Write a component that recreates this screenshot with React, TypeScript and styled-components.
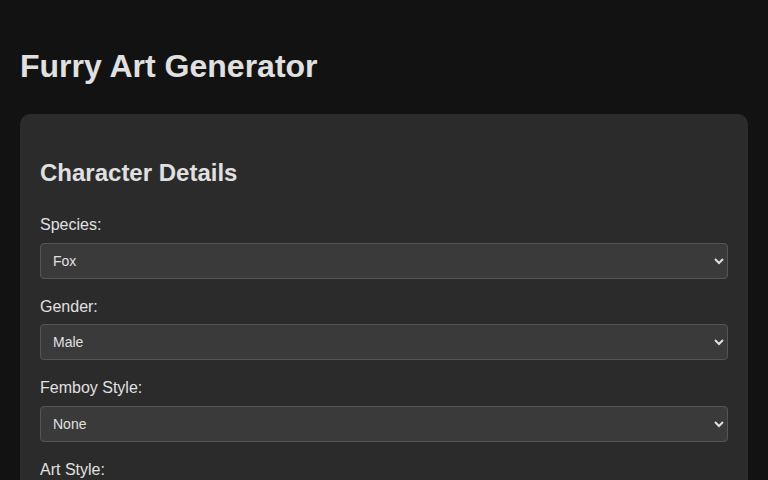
import React from "react";
import styled, { createGlobalStyle } from "styled-components";

const GlobalStyle = createGlobalStyle`
  body {
    margin: 0;
    padding: 20px;
    background-color: #121212;
    color: #e0e0e0;
    font-family: "Liberation Sans", Arial, sans-serif;
    line-height: 1.6;
  }
`;

type Field = {
  id: string;
  label: string;
  options: string[];
};

const fields: Field[] = [
  { id: "species", label: "Species:", options: ["Fox", "Wolf", "Cat", "Dragon", "Rabbit"] },
  { id: "gender", label: "Gender:", options: ["Male", "Female", "Non-binary"] },
  { id: "femboy", label: "Femboy Style:", options: ["None", "Subtle", "Moderate", "Full"] },
  { id: "artStyle", label: "Art Style:", options: ["Cartoon", "Realistic", "Anime", "Chibi"] },
];

export default function App() {
  return (
    <>
      <GlobalStyle />
      <Styled.Title>Furry Art Generator</Styled.Title>
      <Styled.Panel>
        <Styled.PanelTitle>Character Details</Styled.PanelTitle>
        {fields.map((field) => (
          <Styled.FormGroup key={field.id}>
            <Styled.Label htmlFor={field.id}>{field.label}</Styled.Label>
            <Styled.Select id={field.id} defaultValue={field.options[0]}>
              {field.options.map((option) => (
                <option key={option} value={option}>
                  {option}
                </option>
              ))}
            </Styled.Select>
          </Styled.FormGroup>
        ))}
      </Styled.Panel>
    </>
  );
}

const Styled = {
  Title: styled.h1`
    font-size: 32px;
    margin: 21.44px 0;
  `,
  Panel: styled.section`
    background-color: #2b2b2b;
    border-radius: 10px;
    padding: 20px;
  `,
  PanelTitle: styled.h2`
    font-size: 24px;
    margin: 19.92px 0;
  `,
  FormGroup: styled.div`
    margin-bottom: 15px;
  `,
  Label: styled.label`
    display: block;
    margin-bottom: 5px;
    font-size: 16px;
  `,
  Select: styled.select`
    display: block;
    width: 100%;
    box-sizing: border-box;
    height: 36px;
    padding: 8px;
    background-color: #3a3a3a;
    color: #e0e0e0;
    border: 1px solid #555;
    border-radius: 4px;
    font-family: "Liberation Sans", Arial, sans-serif;
    font-size: 14px;
    color-scheme: dark;
  `,
};
